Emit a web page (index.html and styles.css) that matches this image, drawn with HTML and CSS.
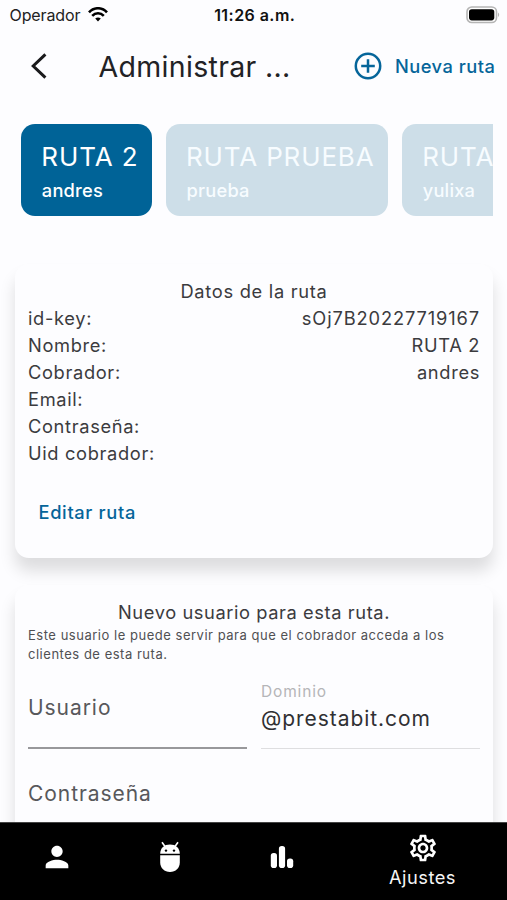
FILE: index.html
```html
<!DOCTYPE html>
<html lang="es">
<head>
<meta charset="utf-8">
<title>Administrar rutas</title>
<link rel="stylesheet" href="styles.css">
</head>
<body>
<div class="screen">
  <div class="status">
    <div class="carrier">
      <span>Operador</span>
      <svg width="20" height="15" viewBox="0 0 20 15" fill="none" stroke="#000" stroke-width="2.6"><path d="M1 5.3C6-.1 14-.1 19 5.3"/><path d="M4.2 8.8c3.3-3.5 8.3-3.5 11.6 0"/><path d="M7.2 11.6c1.7-1.6 3.9-1.6 5.6 0L10 14.5z" fill="#000" stroke="none"/></svg>
    </div>
    <div class="clock">11:26 a.m.</div>
    <svg class="battery" width="34" height="18" viewBox="0 0 34 18"><rect x="1" y="1" width="29.5" height="15.5" rx="4.8" fill="#fff" stroke="#b5b5b5" stroke-width="1.6"/><rect x="3" y="3.2" width="25.3" height="11.2" rx="2.8"/><path d="M32 6.5c1.6.8 1.6 3.7 0 4.5z" fill="#b5b5b5"/></svg>
  </div>

  <header class="appbar">
    <svg class="back" width="18" height="28" viewBox="0 0 18 28" fill="none" stroke="#1a1a1c" stroke-width="3"><path d="M15.4 2.3L3.2 14l12.2 11.7"/></svg>
    <h1>Administrar ...</h1>
    <div class="new">
      <svg width="28" height="28" viewBox="0 0 28 28" fill="none" stroke="#05659a" stroke-width="2.5"><circle cx="14" cy="14" r="12.2"/><path d="M14 7.2v13.6M7.2 14h13.6"/></svg>
      <span>Nueva ruta</span>
    </div>
  </header>

  <div class="routes">
    <div class="route active"><b>RUTA 2</b><span>andres</span></div>
    <div class="route wide"><b>RUTA PRUEBA</b><span>prueba</span></div>
    <div class="route wide"><b>RUTA</b><span>yulixa</span></div>
  </div>

  <main>
    <section class="card info">
      <h2>Datos de la ruta</h2>
      <div class="row"><span>id-key:</span><span class="key">sOj7B20227719167</span></div>
      <div class="row"><span>Nombre:</span><span>RUTA 2</span></div>
      <div class="row"><span>Cobrador:</span><span>andres</span></div>
      <div class="row"><span>Email:</span></div>
      <div class="row"><span>Contraseña:</span></div>
      <div class="row"><span>Uid cobrador:</span></div>
      <div class="edit">Editar ruta</div>
    </section>

    <section class="card user">
      <h2 class="tight">Nuevo usuario para esta ruta.</h2>
      <p>Este usuario le puede servir para que el cobrador acceda a los clientes de esta ruta.</p>
      <div class="fields">
        <div class="field"><span class="hint">Usuario</span></div>
        <div class="field off"><label>Dominio</label><span class="value">@prestabit.com</span></div>
      </div>
      <div class="hint pass">Contraseña</div>
    </section>
  </main>

  <nav>
    <div class="tab"><svg width="34" height="34" viewBox="0 0 24 24"><path d="M12 12c2.21 0 4-1.79 4-4s-1.79-4-4-4-4 1.79-4 4 1.79 4 4 4zm0 2c-2.67 0-8 1.34-8 4v2h16v-2c0-2.66-5.33-4-8-4z"/></svg></div>
    <div class="tab"><svg width="22" height="32" viewBox="0 0 22 32"><path d="M1.2 12.8C1.2 6.8 5.2 3.4 11 3.4s9.8 3.4 9.8 9.4z"/><path d="M1.2 14.2h19.6v7.3C20.8 27 16.6 31 11 31S1.2 27 1.2 21.5z"/><path d="M3 1.3l3.2 4.5M19 1.3l-3.2 4.5" stroke="#fff" stroke-width="1.6"/><circle cx="7" cy="9.6" r="1.2" fill="#000"/><circle cx="15" cy="9.6" r="1.2" fill="#000"/></svg></div>
    <div class="tab"><svg width="24" height="24" viewBox="0 0 24 24"><rect x=".8" y="8" width="6.2" height="15" rx="2.8"/><rect x="8.9" y="1" width="6.2" height="22" rx="2.8"/><rect x="17" y="13.5" width="6.2" height="9.5" rx="2.8"/></svg></div>
    <div class="tab selected">
      <svg width="32" height="32" viewBox="0 0 24 24"><path d="M19.43 12.98c.04-.32.07-.64.07-.98 0-.34-.03-.66-.07-.98l2.11-1.65c.19-.15.24-.42.12-.64l-2-3.46c-.09-.16-.26-.25-.44-.25-.06 0-.12.01-.17.03l-2.49 1c-.52-.4-1.08-.73-1.69-.98l-.38-2.65C14.46 2.18 14.25 2 14 2h-4c-.25 0-.46.18-.49.42l-.38 2.65c-.61.25-1.17.59-1.69.98l-2.49-1c-.06-.02-.12-.03-.18-.03-.17 0-.34.09-.43.25l-2 3.46c-.13.22-.07.49.12.64l2.11 1.65c-.04.32-.07.65-.07.98 0 .33.03.66.07.98l-2.11 1.65c-.19.15-.24.42-.12.64l2 3.46c.09.16.26.25.44.25.06 0 .12-.01.17-.03l2.49-1c.52.4 1.08.73 1.69.98l.38 2.65c.03.24.24.42.49.42h4c.25 0 .46-.18.49-.42l.38-2.65c.61-.25 1.17-.59 1.69-.98l2.49 1c.06.02.12.03.18.03.17 0 .34-.09.43-.25l2-3.46c.12-.22.07-.49-.12-.64l-2.11-1.65zm-1.98-1.71c.04.31.05.52.05.73 0 .21-.02.43-.05.73l-.14 1.13.89.7 1.08.84-.7 1.21-1.27-.51-1.04-.42-.9.68c-.43.32-.84.56-1.25.73l-1.06.43-.16 1.13-.2 1.35h-1.4l-.19-1.35-.16-1.13-1.06-.43c-.43-.18-.83-.41-1.23-.71l-.91-.7-1.06.43-1.27.51-.7-1.21 1.08-.84.89-.7-.14-1.13c-.03-.31-.05-.54-.05-.74s.02-.43.05-.73l.14-1.13-.89-.7-1.08-.84.7-1.21 1.27.51 1.04.42.9-.68c.43-.32.84-.56 1.25-.73l1.06-.43.16-1.13.2-1.35h1.39l.19 1.35.16 1.13 1.06.43c.43.18.83.41 1.23.71l.91.7 1.06-.43 1.27-.51.7 1.21-1.07.85-.89.7.14 1.13zM12 8c-2.21 0-4 1.79-4 4s1.79 4 4 4 4-1.79 4-4-1.79-4-4-4zm0 6c-1.1 0-2-.9-2-2s.9-2 2-2 2 .9 2 2-.9 2-2 2z"/></svg>
      <span>Ajustes</span>
    </div>
  </nav>
</div>
</body>
</html>
```
FILE: styles.css
```css
* { box-sizing: border-box; }
body, h1, h2, p { margin: 0; font-weight: 400; }
body { background: #fdfdff; font-family: Inter, "Liberation Sans", sans-serif; font-size: 18.3px; color: #3b3b3e; }
svg { display: block; flex: none; }
.screen { height: 900px; overflow: hidden; display: flex; flex-direction: column; }

.status { height: 30px; flex: none; display: grid; grid-template-columns: 1fr auto 1fr; align-items: center; padding: 0 7px 0 9.5px; font-size: 16px; color: #222; }
.carrier { display: flex; align-items: center; gap: 8px; letter-spacing: -.1px; }
.carrier svg { margin-bottom: 1px; }
.clock { font-weight: 600; letter-spacing: .45px; color: #111; }
.battery { justify-self: end; margin-bottom: 1px; }

.appbar { height: 72px; flex: none; display: flex; align-items: center; padding: 0 12.5px 0 29.5px; }
.appbar h1 { margin-left: 51px; font-size: 28.5px; letter-spacing: .33px; color: #222225; }
.new { margin-left: auto; display: flex; align-items: center; gap: 12.5px; color: #05659a; font-weight: 500; letter-spacing: .5px; }
.new span { margin-right: -1px; }

.routes { margin: 22px 14px 0 21px; height: 92px; flex: none; display: flex; gap: 13.7px; overflow: hidden; }
.route { flex: none; width: 131px; padding: 15.5px 0 0 20.3px; border-radius: 14px; background: #cddee8; color: #f7fcff; display: flex; flex-direction: column; overflow: hidden; white-space: nowrap; }
.route.wide { width: 222.5px; }
.route.active { background: #006397; color: #fff; }
.route b { font-size: 26px; line-height: 34px; font-weight: 400; letter-spacing: .85px; }
.route.active b { letter-spacing: .9px; }
.route span { font-weight: 500; line-height: 27px; margin: 3.5px 0 0 .5px; letter-spacing: .2px; }

main { flex: 1; min-height: 0; overflow: hidden; padding: 48px 14px 0 15px; display: flex; flex-direction: column; gap: 27px; }
.card { flex: none; background: #fdfdff; border-radius: 14px; box-shadow: 0 13px 16px rgba(0, 0, 0, .13); padding: 13.5px 13px 0; line-height: 27px; letter-spacing: .65px; }
.info { height: 294px; }
.user { height: 420px; }
.card h2 { text-align: center; font-size: 18.3px; letter-spacing: .7px; }
.card h2.tight { letter-spacing: .58px; }
.row { display: flex; justify-content: space-between; }
.key { letter-spacing: .87px; }
.edit { margin: 32px 0 0 10.5px; color: #05659a; font-weight: 500; }
.card p { font-size: 13px; line-height: 19px; letter-spacing: .52px; color: #505053; }
.fields { display: grid; grid-template-columns: 1fr 1fr; gap: 14px; margin-top: 15.5px; }
.field { height: 70px; border-bottom: 2px solid #98989b; display: flex; flex-direction: column; justify-content: center; }
.field.off { border-bottom: 1px solid #dedee0; justify-content: flex-start; height: 69.5px; }
.hint { font-size: 21px; letter-spacing: .94px; color: #58585b; }
.field .hint { padding-bottom: 12px; }
.field label { font-size: 15.5px; line-height: 25px; letter-spacing: .85px; color: #b5b5b8; }
.value { font-size: 21px; line-height: 30px; letter-spacing: .95px; color: #303033; }
.pass { margin-top: 31px; }

nav { height: 78px; flex: none; background: #000; border-top: 1px solid #444; display: grid; grid-template-columns: 113px 113px 112px 169px; color: #f5f5f5; }
.tab { display: flex; flex-direction: column; align-items: center; padding-top: 17px; }
.tab:nth-child(2) { padding-top: 18px; }
.tab:nth-child(3) { padding-top: 22px; }
.tab.selected { padding-top: 8.5px; }
.tab span { line-height: 27px; letter-spacing: .48px; }
nav svg { fill: #fff; }
```
